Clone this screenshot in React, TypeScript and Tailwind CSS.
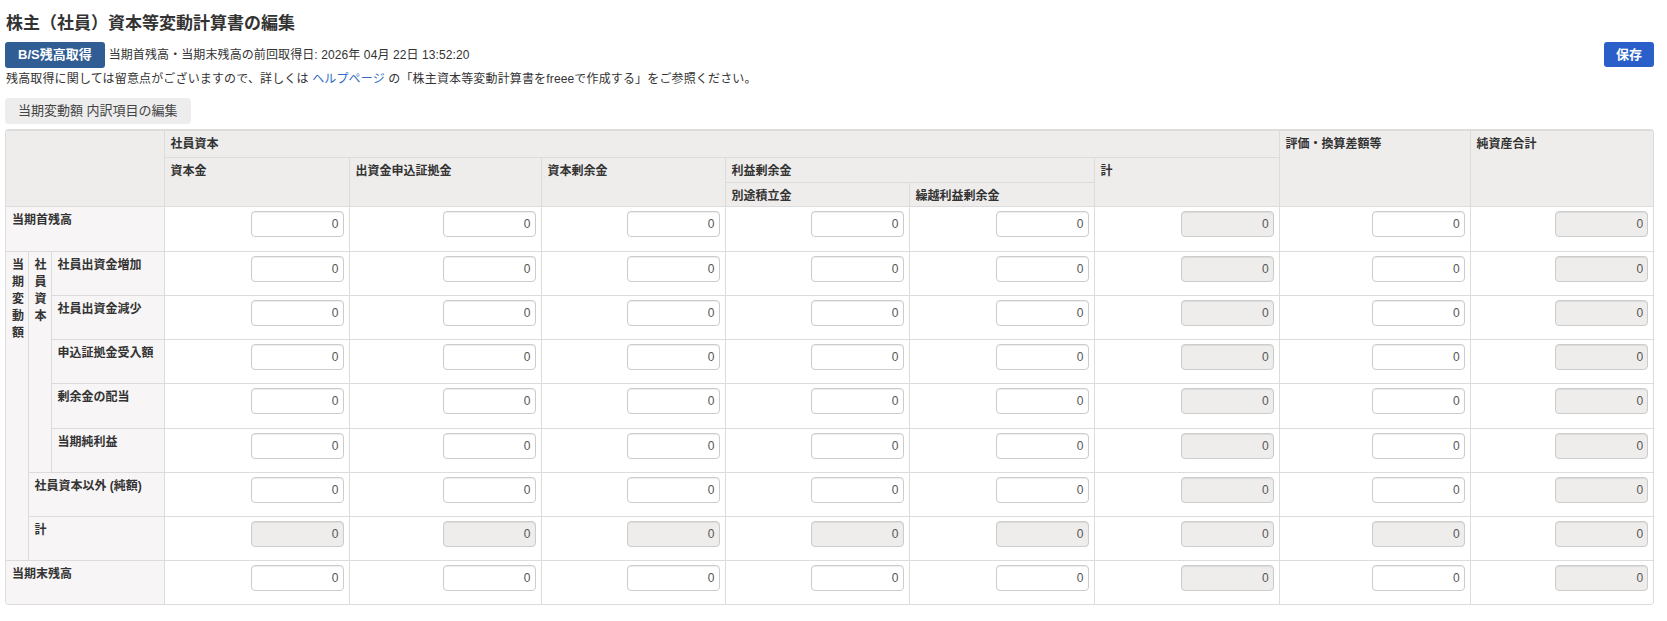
import React from "react";

const TOTAL_COLS = [5, 7];
const COL_WIDTHS = [22, 23, 113, 185, 192, 184, 184, 185, 185, 191, 183];

const th = "border border-[#dcdcdc] px-[6px] pt-[5px] text-left align-top text-[12px] font-bold leading-[17px] text-[#333]";
const headTh = `${th} bg-[#efedec]`;
const labelTh = `${th} bg-[#f7f5f5]`;

const AmountInput = ({ disabled }: { disabled?: boolean }) => (
  <input
    readOnly
    value="0"
    className={
      "h-[26px] w-[93px] rounded-[4px] border border-[#cccccc] pr-[4px] text-right text-[12px] text-[#555] shadow-[inset_0_1px_1px_rgba(0,0,0,0.075)] outline-none " +
      (disabled ? "bg-[#eeedeb]" : "bg-white")
    }
  />
);

const Cells = ({ allDisabled, tall }: { allDisabled?: boolean; tall?: boolean }) => (
  <>
    {Array.from({ length: 8 }).map((_, i) => (
      <td
        key={i}
        className={
          "border border-[#dcdcdc] bg-white pt-[4px] pr-[5px] text-right align-top " + (tall ? "h-[45px]" : "h-[44px]")
        }
      >
        <AmountInput disabled={allDisabled || TOTAL_COLS.includes(i)} />
      </td>
    ))}
  </>
);

export default function App() {
  return (
    <div className="min-h-screen bg-white pt-[12px] pl-[5px] pr-[13px] font-['Liberation_Sans','Noto_Sans_CJK_JP',sans-serif] text-[#333]">
      <h1 className="pl-[1px] text-[17px] font-bold leading-[24px]">株主（社員）資本等変動計算書の編集</h1>

      <div className="mt-[6px] flex h-[26px] items-start">
        <button className="h-[26px] rounded-[3px] bg-[#305d93] px-[13px] text-[13px] font-bold leading-[26px] text-white">
          B/S残高取得
        </button>
        <span className="ml-[4px] self-center text-[12px] leading-[17px] tracking-[0.1px]">
          当期首残高・当期末残高の前回取得日: 2026年 04月 22日 13:52:20
        </span>
        <button className="ml-auto h-[25px] rounded-[3px] bg-[#2a5fc9] px-[12px] text-[13px] font-bold leading-[25px] text-white">
          保存
        </button>
      </div>

      <p className="mt-[3px] pl-[1px] text-[12px] leading-[17px] tracking-[0.15px]">
        残高取得に関しては留意点がございますので、詳しくは <a className="text-[#2f6ac4]">ヘルプページ</a> の「株主資本等変動計算書をfreeeで作成する」をご参照ください。
      </p>

      <button className="mt-[10px] h-[26px] rounded-[4px] bg-[#ededed] px-[13px] text-[13px] leading-[26px] text-[#444]">
        当期変動額 内訳項目の編集
      </button>

      <div className="mt-[5px] overflow-hidden rounded-[4px] border border-t-2 border-[#dcdcdc]">
        <table className="w-full table-fixed border-collapse border-hidden">
          <colgroup>
            {COL_WIDTHS.map((w, i) => (
              <col key={i} style={{ width: w }} />
            ))}
          </colgroup>
          <thead>
            <tr className="h-[26px]">
              <th colSpan={3} rowSpan={3} className={headTh}></th>
              <th colSpan={6} className={headTh}>社員資本</th>
              <th rowSpan={3} className={headTh}>評価・換算差額等</th>
              <th rowSpan={3} className={headTh}>純資産合計</th>
            </tr>
            <tr className="h-[25px]">
              <th rowSpan={2} className={headTh}>資本金</th>
              <th rowSpan={2} className={headTh}>出資金申込証拠金</th>
              <th rowSpan={2} className={headTh}>資本剰余金</th>
              <th colSpan={2} className={headTh}>利益剰余金</th>
              <th rowSpan={2} className={headTh}>計</th>
            </tr>
            <tr className="h-[24px]">
              <th className={headTh}>別途積立金</th>
              <th className={headTh}>繰越利益剰余金</th>
            </tr>
          </thead>
          <tbody>
            <tr>
              <th colSpan={3} className={labelTh}>当期首残高</th>
              <Cells tall />
            </tr>
            <tr>
              <th rowSpan={7} className={labelTh}>当期変動額</th>
              <th rowSpan={5} className={labelTh}>社員資本</th>
              <th className={labelTh}>社員出資金増加</th>
              <Cells />
            </tr>
            <tr>
              <th className={labelTh}>社員出資金減少</th>
              <Cells />
            </tr>
            <tr>
              <th className={labelTh}>申込証拠金受入額</th>
              <Cells />
            </tr>
            <tr>
              <th className={labelTh}>剰余金の配当</th>
              <Cells tall />
            </tr>
            <tr>
              <th className={labelTh}>当期純利益</th>
              <Cells />
            </tr>
            <tr>
              <th colSpan={2} className={labelTh}>社員資本以外 (純額)</th>
              <Cells />
            </tr>
            <tr>
              <th colSpan={2} className={labelTh}>計</th>
              <Cells allDisabled />
            </tr>
            <tr>
              <th colSpan={3} className={labelTh}>当期末残高</th>
              <Cells />
            </tr>
          </tbody>
        </table>
      </div>
    </div>
  );
}
